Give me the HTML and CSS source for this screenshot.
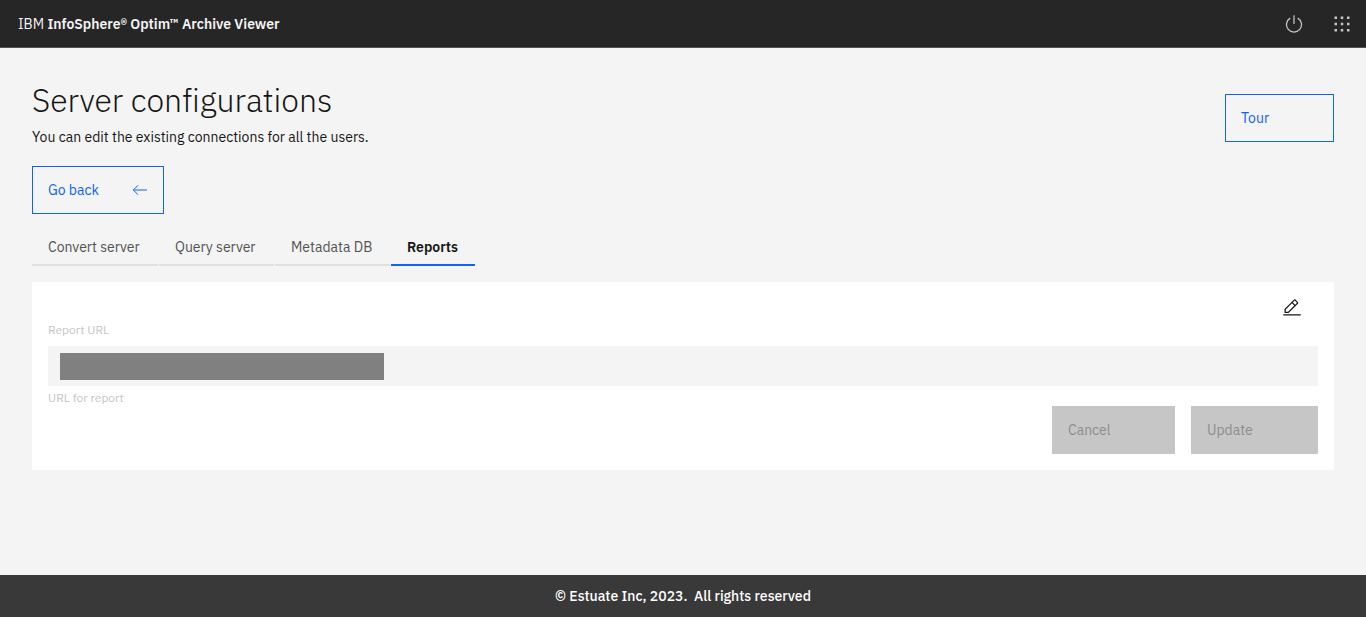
FILE: index.html
```html
<!DOCTYPE html>
<html lang="en">
<head>
<meta charset="utf-8">
<meta name="viewport" content="width=device-width, initial-scale=1">
<title>Server configurations</title>
<link rel="stylesheet" href="styles.css">
</head>
<body>
<header class="topbar">
  <a class="brand" href="#">IBM <span class="brand-name">InfoSphere® Optim™ Archive Viewer</span></a>
  <div class="actions">
    <button class="action" type="button" aria-label="Log out">
      <svg class="icon" viewBox="0 0 32 32" aria-hidden="true"><path d="M22.5 5.74l-1 1.73a11 11 0 1 1-11 0l-1-1.73a13 13 0 1 0 13 0Z"/><path d="M15 2h2v14h-2z"/></svg>
    </button>
    <button class="action" type="button" aria-label="Applications">
      <svg class="icon" viewBox="0 0 32 32" aria-hidden="true"><path d="M4 4h4v4H4zM14 4h4v4h-4zM24 4h4v4h-4zM4 14h4v4H4zM14 14h4v4h-4zM24 14h4v4h-4zM4 24h4v4H4zM14 24h4v4h-4zM24 24h4v4h-4z"/></svg>
    </button>
  </div>
</header>
<main class="page">
  <div class="intro">
    <div>
      <h1 class="title">Server configurations</h1>
      <p class="subtitle">You can edit the existing connections for all the users.</p>
    </div>
    <button class="btn btn-outline btn-tour" type="button">Tour</button>
  </div>
  <button class="btn btn-outline btn-back" type="button">Go back
    <svg class="arrow" viewBox="0 0 16 16" aria-hidden="true"><path d="M6 3.3 1.4 8 6 12.7M1.4 8H15"/></svg>
  </button>
  <div class="tabs" role="tablist">
    <button class="tab tab-convert" type="button" role="tab" aria-selected="false">Convert server</button>
    <button class="tab" type="button" role="tab" aria-selected="false">Query server</button>
    <button class="tab" type="button" role="tab" aria-selected="false">Metadata DB</button>
    <button class="tab tab-reports" type="button" role="tab" aria-selected="true">Reports</button>
  </div>
  <section class="panel" role="tabpanel">
    <button class="edit" type="button" aria-label="Edit">
      <svg class="icon" viewBox="0 0 32 32" aria-hidden="true"><path d="M2 26h28v2H2zM25.4 9c.8-.8.8-2 0-2.8l-3.6-3.6c-.8-.8-2-.8-2.8 0l-15 15V24h6.4l15-15zm-5-5L24 7.6l-3 3L17.4 7l3-3zM6 22v-3.6l10-10 3.6 3.6-10 10H6z"/></svg>
    </button>
    <label class="label" for="report-url">Report URL</label>
    <div class="field">
      <input class="input" id="report-url" type="text" aria-describedby="report-help" disabled>
      <span class="mask"></span>
    </div>
    <p class="help" id="report-help">URL for report</p>
    <div class="buttons">
      <button class="btn btn-cancel" type="button" disabled>Cancel</button>
      <button class="btn btn-update" type="button" disabled>Update</button>
    </div>
  </section>
</main>
<footer class="footer">© Estuate Inc, 2023.&nbsp; All rights reserved</footer>
</body>
</html>
```
FILE: styles.css
```css
* { box-sizing: border-box; }
body {
  margin: 0;
  min-height: 100vh;
  display: flex;
  flex-direction: column;
  background: #f4f4f4;
  color: #161616;
  font: 14px/20px "IBM Plex Sans", Inter, "Liberation Sans", sans-serif;
  font-variant-ligatures: none;
}
button { font: inherit; cursor: pointer; }
h1, p { margin: 0; }
.topbar {
  display: flex;
  align-items: center;
  justify-content: space-between;
  height: 48px;
  padding-left: 18px;
  background: #262626;
  border-bottom: 1px solid #525252;
}
.brand { color: #f4f4f4; text-decoration: none; }
.brand-name { font-weight: 600; }
.actions { display: flex; }
.action {
  display: grid;
  place-items: center;
  width: 48px;
  height: 48px;
  padding: 0;
  border: 0;
  background: none;
  color: #c6c6c6;
}
.icon { display: block; width: 20px; height: 20px; fill: currentColor; }
.page { flex: 1; padding: 32px; }
.intro {
  display: flex;
  justify-content: space-between;
  align-items: center;
}
.title { font-size: 32px; line-height: 40px; font-weight: 300; }
.subtitle { padding-top: 7px; }
.btn {
  display: flex;
  align-items: center;
  justify-content: space-between;
  height: 48px;
  padding: 0 15px;
  border: 1px solid transparent;
}
.btn-outline { color: #0f62fe; border-color: #0f62fe; background: none; }
.btn-tour { width: 109px; margin-top: 8px; }
.btn-back { width: 132px; margin-top: 19px; }
.arrow { width: 16px; height: 16px; fill: none; stroke: currentColor; }
.btn:disabled { background: #c6c6c6; color: #8d8d8d; cursor: default; }
.btn-cancel { width: 123px; }
.btn-update { width: 127px; }
.tabs { display: flex; gap: 1px; margin-top: 12px; }
.tab {
  min-width: 115px;
  height: 40px;
  padding: 4px 16px 0;
  border: 0;
  border-bottom: 2px solid #e0e0e0;
  background: none;
  color: #525252;
  text-align: left;
  white-space: nowrap;
}
.tab-convert { min-width: 126px; }
.tab-reports { min-width: 84px; color: #161616; font-weight: 600; border-color: #0f62fe; }
.panel {
  display: flex;
  flex-direction: column;
  margin-top: 16px;
  padding: 16px;
  background: #fff;
}
.edit {
  align-self: flex-end;
  margin-right: 16px;
  padding: 0;
  border: 0;
  background: none;
  color: #161616;
}
.label, .help { color: #c6c6c6; font-size: 12px; line-height: 16px; }
.label { margin: 4px 0 8px; }
.field { position: relative; }
.input {
  display: block;
  width: 100%;
  height: 40px;
  padding: 0 16px;
  border: 0;
  background: #f4f4f4;
  font: inherit;
}
.mask {
  position: absolute;
  top: 7px;
  left: 12px;
  width: 324px;
  height: 27px;
  background: #808080;
}
.help { margin-top: 4px; }
.buttons { display: flex; justify-content: flex-end; gap: 16px; }
.footer {
  padding: 11px 16px;
  background: #393939;
  color: #fff;
  font-weight: 500;
  text-align: center;
}
```
